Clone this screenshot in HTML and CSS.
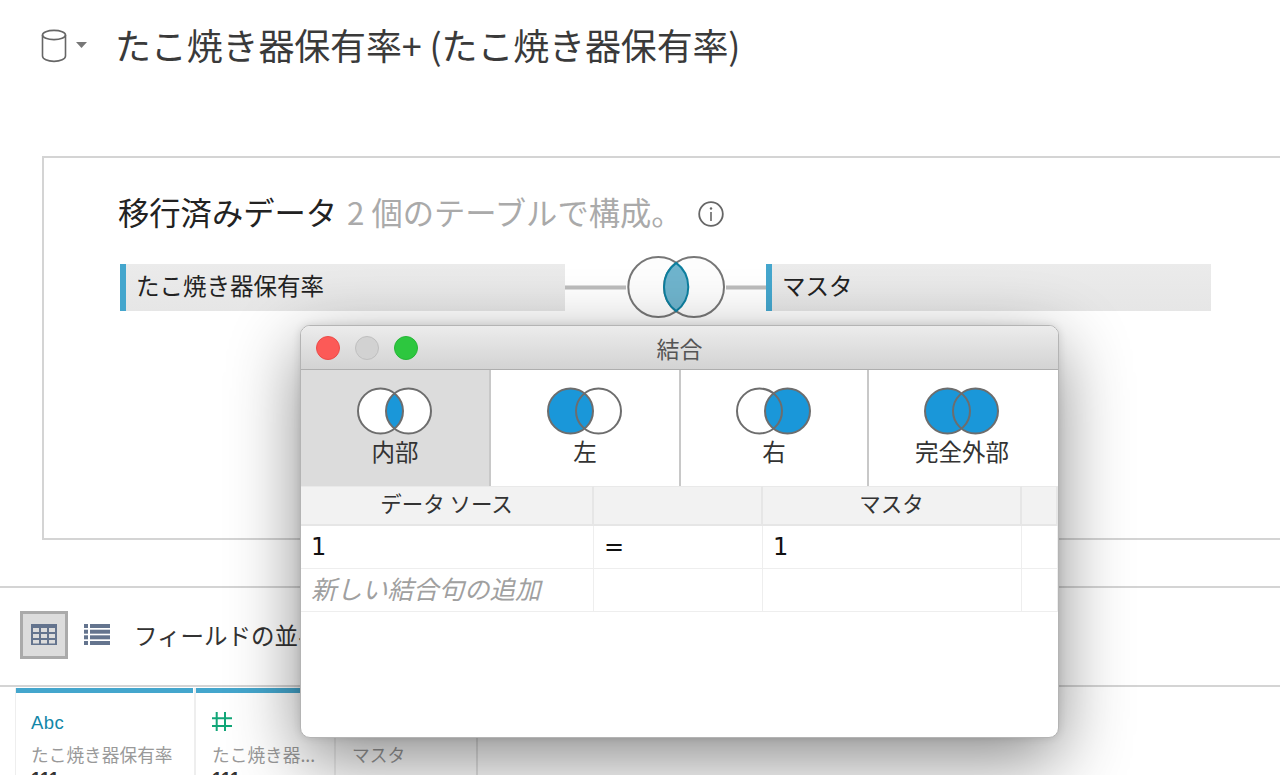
FILE: index.html
```html
<!DOCTYPE html>
<html lang="ja">
<head>
<meta charset="utf-8">
<title>結合</title>
<link rel="stylesheet" href="styles.css">
</head>
<body>
<div class="page">
  <header class="head">
    <svg class="db-icon" width="26" height="34" viewBox="0 0 26 34"><g fill="none" stroke="#666" stroke-width="1.6"><ellipse cx="13" cy="6" rx="11.5" ry="4.6"/><path d="M1.5 6V27c0 3 5 5.4 11.5 5.4S24.500 30 24.500 27V6"/></g></svg>
    <svg class="caret" width="11" height="6" viewBox="0 0 11 6"><path d="M0 0h11L5.500 6z" fill="#777"/></svg>
    <h1 class="title">たこ焼き器保有率+ (たこ焼き器保有率)</h1>
  </header>

  <section class="canvas">
    <h2 class="canvas-title"><span class="strong">移行済みデータ</span> <span class="muted">2 個のテーブルで構成。</span>
      <svg class="info" width="26" height="26" viewBox="0 0 26 26"><circle cx="13" cy="13" r="11.800" fill="none" stroke="#666" stroke-width="1.8"/><circle cx="13" cy="7.500" r="1.200" fill="#666"/><path d="M13 11v9" stroke="#666" stroke-width="1.600"/></svg>
    </h2>
    <div class="tables">
      <div class="table-pill">たこ焼き器保有率</div>
      <svg class="link" width="201" height="64" viewBox="0 0 201 64">
        <path d="M0 32.500H61M161 32.500H201" stroke="#bcbcbc" stroke-width="4"/>
        <circle cx="93.300" cy="32" r="30" fill="#fdfdfd" stroke="#777" stroke-width="2"/>
        <circle cx="129" cy="32" r="30" fill="#fdfdfd" stroke="#777" stroke-width="2"/>
        <path d="M111.150 7.900A30 30 0 0 1 111.150 56.100A30 30 0 0 1 111.150 7.900Z" fill="#6fb4cd" stroke="#0d7f9f" stroke-width="2"/>
      </svg>
      <div class="table-pill">マスタ</div>
    </div>
  </section>

  <div class="toolbar">
    <button class="view-btn active" type="button">
      <svg width="26" height="21" viewBox="0 0 26 21"><rect width="26" height="21" fill="#64748e"/><g fill="#dcdcdc"><rect x="2" y="4" width="6" height="4"/><rect x="10" y="4" width="6" height="4"/><rect x="18" y="4" width="6" height="4"/><rect x="2" y="10" width="6" height="4"/><rect x="10" y="10" width="6" height="4"/><rect x="18" y="10" width="6" height="4"/><rect x="2" y="16" width="6" height="3.500"/><rect x="10" y="16" width="6" height="3.500"/><rect x="18" y="16" width="6" height="3.500"/></g></svg>
    </button>
    <button class="view-btn list" type="button">
      <svg width="26" height="21" viewBox="0 0 26 21"><g fill="#64748e"><rect x="0" y="0" width="4" height="4"/><rect x="6" y="0" width="20" height="4"/><rect x="0" y="5.700" width="4" height="4"/><rect x="6" y="5.700" width="20" height="4"/><rect x="0" y="11.300" width="4" height="4"/><rect x="6" y="11.300" width="20" height="4"/><rect x="0" y="17" width="4" height="4"/><rect x="6" y="17" width="20" height="4"/></g></svg>
    </button>
    <span class="sort-label">フィールドの並べ替え</span>
  </div>

  <div class="fields">
    <div class="field wide">
      <span class="type abc">Abc</span>
      <span class="field-name">たこ焼き器保有率</span>
      <span class="field-value">111</span>
    </div>
    <div class="field mid">
      <span class="type"><svg width="20" height="19" viewBox="0 0 20 19"><path d="M4.700 0V19M13 0V19M0 6.300H20M0 14H20" stroke="#12a678" stroke-width="2" fill="none"/></svg></span>
      <span class="field-name">たこ焼き器...</span>
      <span class="field-value">111</span>
    </div>
    <div class="field narrow">
      <span class="type"></span>
      <span class="field-name">マスタ</span>
    </div>
  </div>

  <div class="dialog">
    <div class="titlebar">
      <span class="light red"></span>
      <span class="light gray"></span>
      <span class="light green"></span>
      <span class="dialog-title">結合</span>
    </div>
    <div class="join-types">
      <div class="join selected">
        <svg class="venn" width="76" height="50" viewBox="0 0 76 50">
          <circle cx="23.500" cy="25" r="22.500" fill="#fff"/><circle cx="51.500" cy="25" r="22.500" fill="#fff"/>
          <path d="M37.500 7.400A22.500 22.500 0 0 1 37.500 42.600A22.500 22.500 0 0 1 37.500 7.400Z" fill="#1a97d9"/>
          <circle cx="23.500" cy="25" r="22.500" fill="none" stroke="#6d6d6d" stroke-width="2"/><circle cx="51.500" cy="25" r="22.500" fill="none" stroke="#6d6d6d" stroke-width="2"/>
        </svg>
        <span>内部</span>
      </div>
      <div class="join">
        <svg class="venn" width="76" height="50" viewBox="0 0 76 50">
          <circle cx="51.500" cy="25" r="22.500" fill="#fff"/><circle cx="23.500" cy="25" r="22.500" fill="#1a97d9"/>
          <circle cx="23.500" cy="25" r="22.500" fill="none" stroke="#6d6d6d" stroke-width="2"/><circle cx="51.500" cy="25" r="22.500" fill="none" stroke="#6d6d6d" stroke-width="2"/>
        </svg>
        <span>左</span>
      </div>
      <div class="join">
        <svg class="venn" width="76" height="50" viewBox="0 0 76 50">
          <circle cx="23.500" cy="25" r="22.500" fill="#fff"/><circle cx="51.500" cy="25" r="22.500" fill="#1a97d9"/>
          <circle cx="23.500" cy="25" r="22.500" fill="none" stroke="#6d6d6d" stroke-width="2"/><circle cx="51.500" cy="25" r="22.500" fill="none" stroke="#6d6d6d" stroke-width="2"/>
        </svg>
        <span>右</span>
      </div>
      <div class="join">
        <svg class="venn" width="76" height="50" viewBox="0 0 76 50">
          <circle cx="23.500" cy="25" r="22.500" fill="#1a97d9"/><circle cx="51.500" cy="25" r="22.500" fill="#1a97d9"/>
          <circle cx="23.500" cy="25" r="22.500" fill="none" stroke="#6d6d6d" stroke-width="2"/><circle cx="51.500" cy="25" r="22.500" fill="none" stroke="#6d6d6d" stroke-width="2"/>
        </svg>
        <span>完全外部</span>
      </div>
    </div>
    <div class="clauses">
      <div class="th">データ ソース</div><div class="th"></div><div class="th">マスタ</div><div class="th"></div>
      <div class="td num">1</div><div class="td num">=</div><div class="td num">1</div><div class="td"></div>
      <div class="td add">新しい結合句の追加</div><div class="td"></div><div class="td"></div><div class="td"></div>
    </div>
  </div>
</div>
</body>
</html>
```
FILE: styles.css
```css
* { box-sizing: border-box; }
html, body { margin: 0; padding: 0; background: #fff; }
body { font-family: "Noto Sans CJK JP", "Noto Sans", sans-serif; color: #333; }
.page { position: relative; width: 1280px; height: 775px; overflow: hidden; }

.head { height: 156px; padding: 28px 0 0 41px; display: flex; align-items: flex-start; }
.db-icon { margin-top: 1px; flex: none; }
.caret { margin: 14px 0 0 9px; flex: none; }
.title { margin: 0 0 0 28px; font-size: 36px; font-weight: 400; line-height: 32px; color: #3a3a3a; letter-spacing: -0.15px; white-space: nowrap; }

.canvas { height: 384px; margin-left: 42px; margin-right: -10px; border: 2px solid #d4d4d4; padding: 34px 0 0 74px; }
.canvas-title { margin: 0; font-size: 31.300px; font-weight: 400; line-height: 40px; display: flex; align-items: center; white-space: pre; }
.strong { color: #222; }
.muted { color: #aaa; margin-left: 10px; }
.info { margin: 3px 0 0 15px; }
.tables { display: flex; align-items: center; margin: 23px 0 0 2px; }
.table-pill { width: 445px; height: 47px; flex: none; background: linear-gradient(#ebebeb, #e6e6e6); border-left: 6px solid #44a6cd; padding-left: 10px; font-size: 23.500px; line-height: 42px; color: #222; white-space: nowrap; }
.link { flex: none; }

.toolbar { height: 101px; margin-top: 46px; border-top: 2px solid #d4d4d4; border-bottom: 2px solid #d4d4d4; display: flex; align-items: center; padding: 0 0 4px 20px; }
.view-btn { width: 48px; height: 48px; padding: 0; background: none; border: 3px solid transparent; display: flex; align-items: center; justify-content: center; }
.view-btn.active { background: #dcdcdc; border-color: #aaa; }
.view-btn.list { margin-left: 5px; }
.sort-label { margin-left: 13px; font-size: 23.500px; color: #333; white-space: nowrap; }

.fields { display: flex; padding-left: 15px; margin-top: 1px; }
.field { height: 90px; display: flex; flex-direction: column; border-left: 2px solid #eee; }
.field::before { content: ""; display: block; flex: none; height: 5px; margin-bottom: 19px; margin-right: 1px; background: #44a6cd; }
.field > span { flex: none; margin-left: 16px; }
.field.wide { width: 179px; border-left-width: 1px; }
.field.wide > span { margin-left: 15px; }
.field.mid { width: 140px; }
.field.mid::before { margin-right: 0; }
.field.narrow { width: 144px; border-right: 2px solid #e4e4e4; }
.field.narrow::before { background: transparent; }
.type { height: 24px; font-family: "Liberation Sans", sans-serif; font-size: 18.500px; line-height: 22px; letter-spacing: 0.4px; }
.abc { color: #1287a8; }
.field-name { margin-top: 5px; font-size: 17.700px; line-height: 26px; color: #999; white-space: nowrap; }
.field-value { font-family: "Liberation Sans", sans-serif; font-weight: 700; font-size: 18px; line-height: 24px; color: #333; }

.dialog { position: absolute; left: 300px; top: 325px; width: 759px; height: 413px; background: #fff; border: 1px solid #b4b4b4; border-radius: 10px; box-shadow: 0 22px 70px rgba(0,0,0,.46), 0 0 8px rgba(0,0,0,.12); }
.titlebar { position: relative; height: 44px; display: flex; align-items: center; padding-left: 15px; gap: 15px; background: linear-gradient(#ececec, #d3d3d3); border-bottom: 1px solid #aeaeae; border-radius: 9px 9px 0 0; }
.light { width: 24px; height: 24px; border-radius: 50%; flex: none; }
.red { background: #fc5a57; border: 1px solid #ec4b48; }
.gray { background: #d2d2d2; border: 1px solid #bfbfbf; }
.green { background: #2dc73f; border: 1px solid #25b636; }
.dialog-title { position: absolute; left: 0; right: 0; text-align: center; font-size: 23px; line-height: 44px; color: #555; }

.join-types { display: grid; grid-template-columns: 190px 190px 188px 189px; height: 116px; }
.join { display: flex; flex-direction: column; align-items: center; padding-top: 16px; font-size: 23.500px; line-height: 30px; color: #333; border-right: 2px solid #c8c8c8; }
.join:last-child { border-right: 0; padding-right: 3px; }
.join.selected { background: #dcdcdc; }
.venn { flex: none; }

.clauses { display: grid; grid-template-columns: 293px 169px 259px 36px; grid-template-rows: 40px 43px 43px; }
.th { background: #f2f2f2; border-right: 2px solid #e6e6e6; border-bottom: 2px solid #e6e6e6; border-top: 1px solid #e9e9e9; text-align: center; font-size: 21.500px; line-height: 32px; color: #333; }
.td { border-right: 1px solid #eee; border-bottom: 1px solid #eee; padding-left: 10px; color: #111; }
.num { font-family: "DejaVu Sans", sans-serif; font-size: 24px; line-height: 42px; }
.add { font-size: 25.500px; font-style: italic; line-height: 38px; color: #a0a0a0; white-space: nowrap; }
```
